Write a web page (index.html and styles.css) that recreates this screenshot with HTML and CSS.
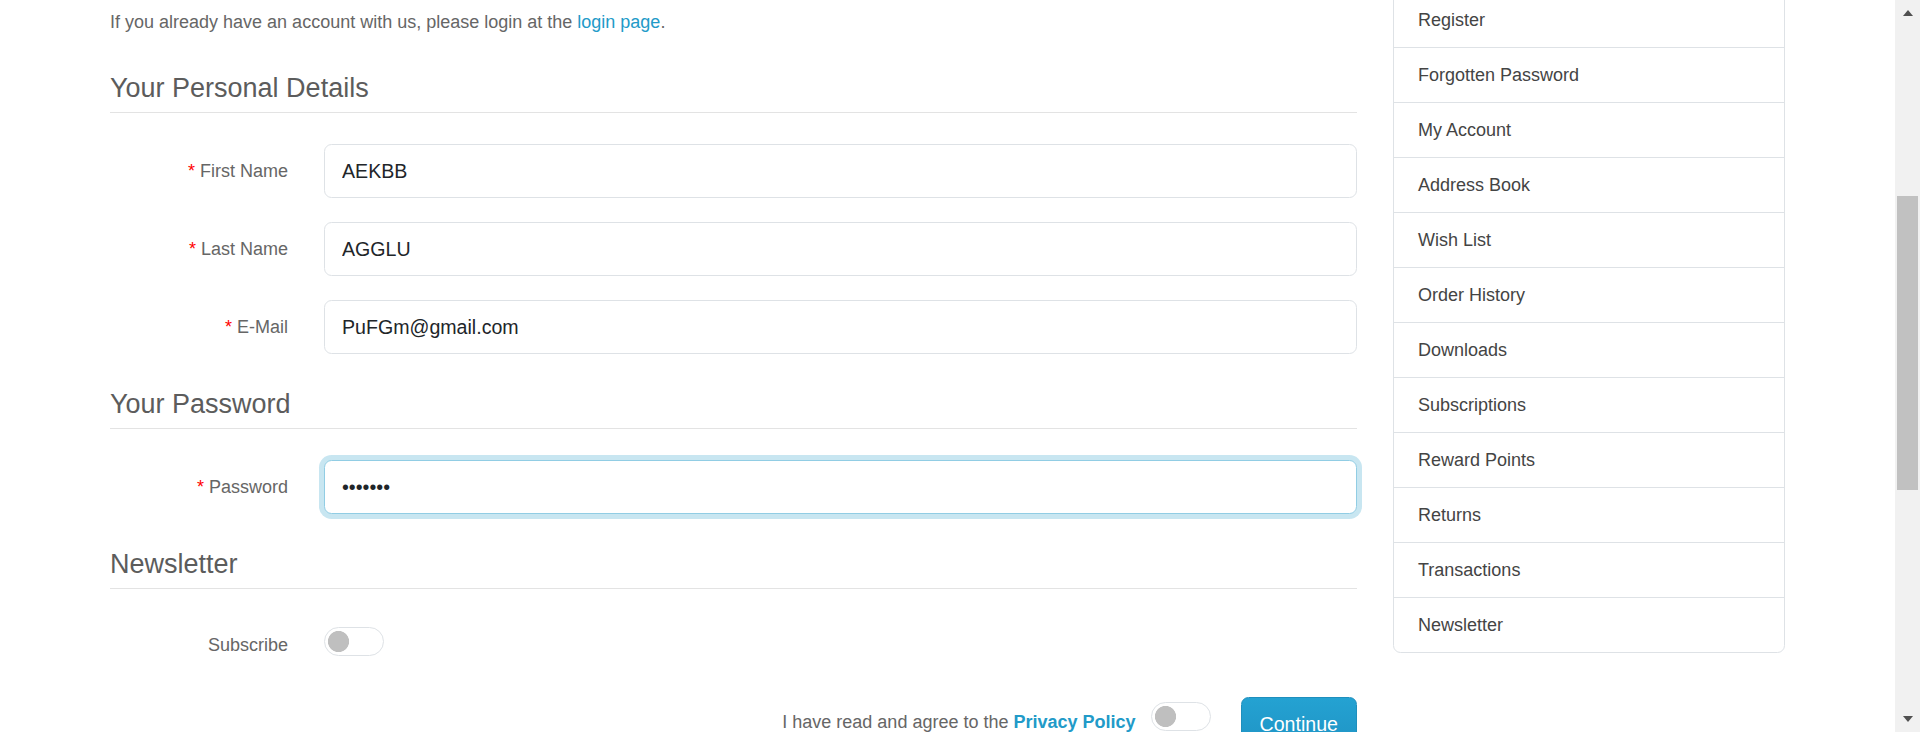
FILE: index.html
```html
<!DOCTYPE html>
<html lang="en">
<head>
<meta charset="utf-8">
<title>Register Account</title>
<link rel="stylesheet" href="styles.css">
</head>
<body>
<div class="window">
  <div class="viewport">
    <div class="container">
      <main class="content">
        <p class="intro">If you already have an account with us, please login at the <a href="#">login page</a>.</p>
        <form class="register">
          <section class="group">
            <h2 class="section-title">Your Personal Details</h2>
            <div class="fields">
              <div class="field">
                <label class="label required" for="firstname">First Name</label>
                <input class="control" id="firstname" type="text" value="AEKBB">
              </div>
              <div class="field">
                <label class="label required" for="lastname">Last Name</label>
                <input class="control" id="lastname" type="text" value="AGGLU">
              </div>
              <div class="field">
                <label class="label required" for="email">E-Mail</label>
                <input class="control" id="email" type="text" value="PuFGm@gmail.com">
              </div>
            </div>
          </section>
          <section class="group">
            <h2 class="section-title">Your Password</h2>
            <div class="fields">
              <div class="field">
                <label class="label required" for="password">Password</label>
                <input class="control focused" id="password" type="password" value="abcdefg">
              </div>
            </div>
          </section>
          <section class="group">
            <h2 class="section-title">Newsletter</h2>
            <div class="fields">
              <div class="field field-switch">
                <label class="label label-switch" for="newsletter">Subscribe</label>
                <input class="switch switch-sub" id="newsletter" type="checkbox">
              </div>
            </div>
          </section>
          <div class="agree-row">
            <span class="agree-text">I have read and agree to the <a class="policy" href="#">Privacy Policy</a></span>
            <input class="switch switch-agree" type="checkbox" aria-label="Agree">
            <button class="btn-primary" type="button">Continue</button>
          </div>
        </form>
      </main>
      <aside class="sidebar">
        <nav class="list-group">
          <a class="item" href="#">Register</a>
          <a class="item" href="#">Forgotten Password</a>
          <a class="item" href="#">My Account</a>
          <a class="item" href="#">Address Book</a>
          <a class="item" href="#">Wish List</a>
          <a class="item" href="#">Order History</a>
          <a class="item" href="#">Downloads</a>
          <a class="item" href="#">Subscriptions</a>
          <a class="item" href="#">Reward Points</a>
          <a class="item" href="#">Returns</a>
          <a class="item" href="#">Transactions</a>
          <a class="item" href="#">Newsletter</a>
        </nav>
      </aside>
    </div>
  </div>
  <div class="scrollbar">
    <div class="sb-button"><span class="sb-arrow up"></span></div>
    <div class="sb-track"><div class="sb-thumb"></div></div>
    <div class="sb-button"><span class="sb-arrow down"></span></div>
  </div>
</div>
</body>
</html>
```

FILE: styles.css
```css
* { box-sizing: border-box; }

html, body {
  margin: 0;
  height: 100%;
}

body {
  font-family: "Liberation Sans", Arial, sans-serif;
  font-size: 18px;
  color: #666;
  background: #fff;
  overflow: hidden;
}

.window {
  display: flex;
  height: 732px;
}

.viewport {
  flex: 1;
  min-width: 0;
  overflow: hidden;
}

.container {
  display: flex;
  gap: 36px;
  padding: 0 110px;
}

.content {
  flex: 1;
  min-width: 0;
}

.sidebar {
  flex: none;
  width: 392px;
}

.intro {
  margin: 9px 0 0;
  line-height: 26px;
}

.intro a {
  color: #229ac8;
  text-decoration: none;
}

.register {
  margin: 0;
}

.section-title {
  margin: 34px 0 0;
  padding-bottom: 8px;
  font-size: 27px;
  font-weight: 400;
  line-height: 32px;
  color: #5c5c5c;
  border-bottom: 1px solid #e3e3e3;
}

.group:first-child .section-title {
  margin-top: 37px;
}

.fields {
  display: flex;
  flex-direction: column;
  gap: 24px;
  padding-top: 31px;
}

.field {
  display: grid;
  grid-template-columns: 178px 1fr;
  column-gap: 36px;
  align-items: center;
}

.label {
  text-align: right;
  line-height: 26px;
  color: #666;
}

.required::before {
  content: "* ";
  color: #f00;
}

.control {
  display: block;
  width: 100%;
  height: 54px;
  margin: 0;
  padding: 0 17px;
  border: 1px solid #dee2e6;
  border-radius: 7.5px;
  background: #fff;
  font-family: "Liberation Sans", Arial, sans-serif;
  font-size: 19.6px;
  color: #212529;
  outline: none;
}

.control.focused {
  border-color: #91cde4;
  box-shadow: 0 0 0 5px rgba(34, 154, 200, 0.25);
}

.field-switch {
  align-items: start;
}

.label-switch {
  margin-top: 12px;
}

.switch {
  appearance: none;
  -webkit-appearance: none;
  display: block;
  width: 60px;
  height: 29px;
  margin: 0;
  border: 1px solid #dee2e6;
  border-radius: 15px;
  background: #fff radial-gradient(circle 11px at 13.5px 50%, #bfbfbf 10.2px, rgba(191, 191, 191, 0) 10.9px);
  outline: none;
}

.switch-sub {
  margin-top: 7px;
}

.agree-row {
  display: flex;
  justify-content: flex-end;
  align-items: flex-start;
  margin-top: 39px;
}

.agree-text {
  margin-top: 12px;
  line-height: 26px;
  color: #666;
}

.policy {
  color: #229ac8;
  font-weight: 700;
  text-decoration: none;
}

.switch-agree {
  margin-top: 5px;
  margin-left: 15.5px;
}

.btn-primary {
  height: 54px;
  margin-left: 29.5px;
  padding: 0 18px;
  border: 1px solid #1f8fbd;
  border-radius: 7.5px;
  background: linear-gradient(#24a2d2, #1f93c4);
  color: #fff;
  font-family: "Liberation Sans", Arial, sans-serif;
  font-size: 19.6px;
}

/* Sidebar list group */
.list-group {
  display: flex;
  flex-direction: column;
  margin-top: -8px;
  border: 1px solid #dee2e6;
  border-radius: 7.5px;
  overflow: hidden;
}

.item {
  display: block;
  height: 55px;
  padding: 0 24px;
  border-top: 1px solid #dee2e6;
  line-height: 54px;
  color: #444;
  text-decoration: none;
  font-size: 18px;
}

.item:first-child {
  height: 54px;
  border-top: 0;
}

/* Fake browser scrollbar */
.scrollbar {
  flex: none;
  width: 25px;
  display: flex;
  flex-direction: column;
  background: #f1f1f1;
}

.sb-button {
  height: 26px;
  display: flex;
  align-items: center;
  justify-content: center;
}

.sb-arrow {
  width: 0;
  height: 0;
  border-left: 5.5px solid transparent;
  border-right: 5.5px solid transparent;
}

.sb-arrow.up {
  border-bottom: 6px solid #505050;
}

.sb-arrow.down {
  border-top: 6px solid #505050;
}

.sb-track {
  flex: 1;
  padding: 170px 2px 0;
}

.sb-thumb {
  height: 294px;
  background: #c1c1c1;
}
```
